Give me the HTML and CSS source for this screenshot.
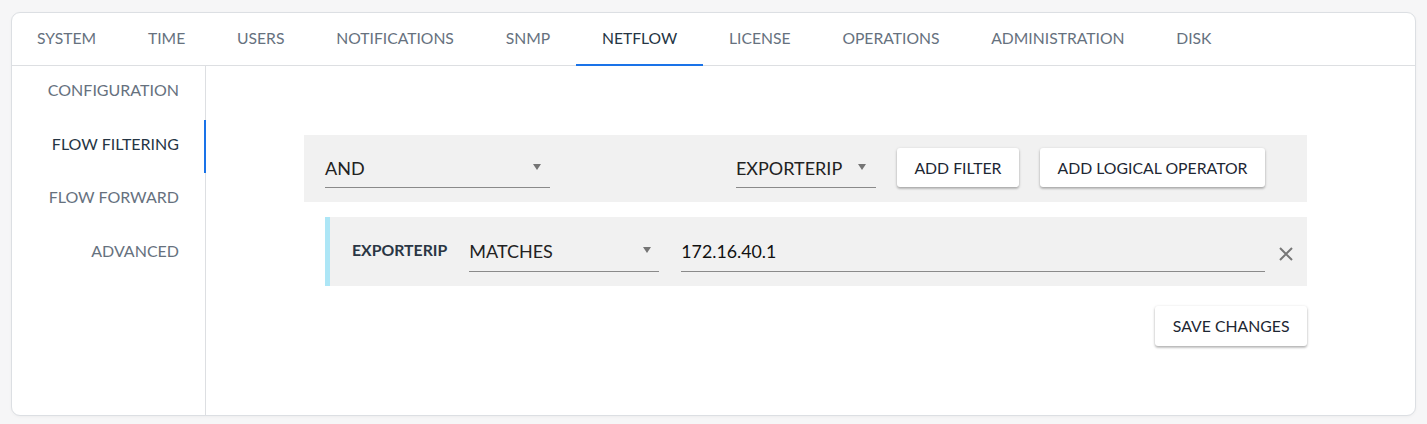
FILE: index.html
```html
<!DOCTYPE html>
<html>
<head>
<meta charset="utf-8">
<link rel="stylesheet" href="styles.css">
</head>
<body>
<div class="card">
  <nav class="tabs">
    <div class="tab">SYSTEM</div>
    <div class="tab">TIME</div>
    <div class="tab">USERS</div>
    <div class="tab">NOTIFICATIONS</div>
    <div class="tab">SNMP</div>
    <div class="tab active">NETFLOW</div>
    <div class="tab">LICENSE</div>
    <div class="tab">OPERATIONS</div>
    <div class="tab">ADMINISTRATION</div>
    <div class="tab">DISK</div>
  </nav>
  <div class="body">
    <aside class="side">
      <div class="side-item">CONFIGURATION</div>
      <div class="side-item active">FLOW FILTERING</div>
      <div class="side-item">FLOW FORWARD</div>
      <div class="side-item">ADVANCED</div>
    </aside>
    <main class="main">
      <div class="op-row">
        <div class="select sel-and"><span>AND</span><span class="arrow"></span></div>
        <div class="spacer"></div>
        <div class="select sel-exp"><span>EXPORTERIP</span><span class="arrow"></span></div>
        <button class="btn">ADD FILTER</button>
        <button class="btn">ADD LOGICAL OPERATOR</button>
      </div>
      <div class="filter-row">
        <span class="label">EXPORTERIP</span>
        <div class="select sel-match"><span>MATCHES</span><span class="arrow"></span></div>
        <div class="input">172.16.40.1</div>
        <svg class="close" width="14" height="14" viewBox="0 0 14 14"><path d="M1 1L13 13M13 1L1 13" stroke="#777" stroke-width="2" fill="none"/></svg>
      </div>
      <div class="actions">
        <button class="btn save">SAVE CHANGES</button>
      </div>
    </main>
  </div>
</div>
</body>
</html>
```

FILE: styles.css
```css
* { box-sizing: border-box; }
html, body { margin: 0; padding: 0; }
body {
  background: #f6f6f7;
  font-family: Lato, "Open Sans", sans-serif;
  padding: 12px 11px 8px 11px;
  height: 424px;
}
.card {
  background: #fff;
  border: 1px solid #dcdfe3;
  border-radius: 9px;
  height: 404px;
  display: flex;
  flex-direction: column;
  overflow: hidden;
  box-shadow: 0 1px 3px rgba(0,0,0,0.04);
}
.tabs {
  display: flex;
  height: 53px;
  border-bottom: 1px solid #dddfe2;
  flex: none;
}
.tab {
  padding: 0 25.9px;
  font-size: 15.7px;
  color: #66717e;
  display: flex;
  align-items: center;
  padding-bottom: 2px;
  border-bottom: 2px solid transparent;
  margin-bottom: -1px;
}
.tab:first-child { padding-left: 25px; }
.tab.active {
  color: #253544;
  border-bottom-color: #1a73e8;
}
.body {
  display: flex;
  flex: 1;
}
.side {
  width: 194px;
  border-right: 1px solid #dddfe2;
  flex: none;
}
.side-item {
  height: 53.7px;
  display: flex;
  align-items: center;
  justify-content: flex-end;
  padding-right: 25px;
  font-size: 16px;
  color: #66717e;
  margin-right: -1px;
  border-right: 2px solid transparent;
  padding-bottom: 7px;
}
.side-item.active {
  color: #253544;
  border-right-color: #1a73e8;
}
.main {
  flex: 1;
  padding: 69px 108px 0 98px;
}
.op-row {
  background: #f1f1f1;
  height: 67px;
  display: flex;
  align-items: center;
  padding: 0 42px 0 21px;
}
.select {
  display: flex;
  align-items: center;
  justify-content: space-between;
  border-bottom: 1px solid #8a8a8a;
  height: 40px;
  font-size: 18px;
  color: #222;
}
.arrow {
  width: 0; height: 0;
  border-left: 4.5px solid transparent;
  border-right: 4.5px solid transparent;
  border-top: 6px solid #757575;
  margin-right: 9px;
  margin-bottom: 2px;
}
.sel-and { width: 225px; margin-top: -1px; }
.spacer { flex: 1; }
.sel-exp { width: 140px; margin-top: -1px; }
.sel-exp .arrow { margin-right: 10px; }
.btn {
  font-family: Lato, sans-serif;
  font-size: 15.8px;
  color: #1d2733;
  background: #fff;
  border: none;
  border-radius: 3px;
  height: 39px;
  box-shadow: 0 1px 3px rgba(0,0,0,0.25), 0 2px 2px rgba(0,0,0,0.12);
  padding: 0 17.5px;
  margin-left: 21px;
  margin-top: -2px;
}
.filter-row {
  margin: 15px 0 0 21px;
  background: #f1f1f1;
  border-left: 5px solid #ade6f6;
  height: 69px;
  display: flex;
  align-items: center;
  padding: 0 14px 0 22px;
}
.label {
  font-size: 15.8px;
  font-weight: 700;
  color: #2a3644;
  margin-right: 22px;
  margin-bottom: 4px;
}
.sel-match { width: 190px; margin-top: 0; }
.sel-match .arrow { margin-right: 8px; }
.input {
  flex: 1;
  margin-left: 22px;
  border-bottom: 1px solid #8a8a8a;
  height: 40px;
  display: flex;
  align-items: center;
  font-size: 17.8px;
  color: #111;
  margin-top: 0;
}
.close { margin-left: 14px; margin-top: 4px; }
.actions {
  display: flex;
  justify-content: flex-end;
  margin-top: 20px;
}
.save {
  height: 40px;
  padding: 0 17.5px;
  margin: 0;
  padding-bottom: 2px;
}
```
